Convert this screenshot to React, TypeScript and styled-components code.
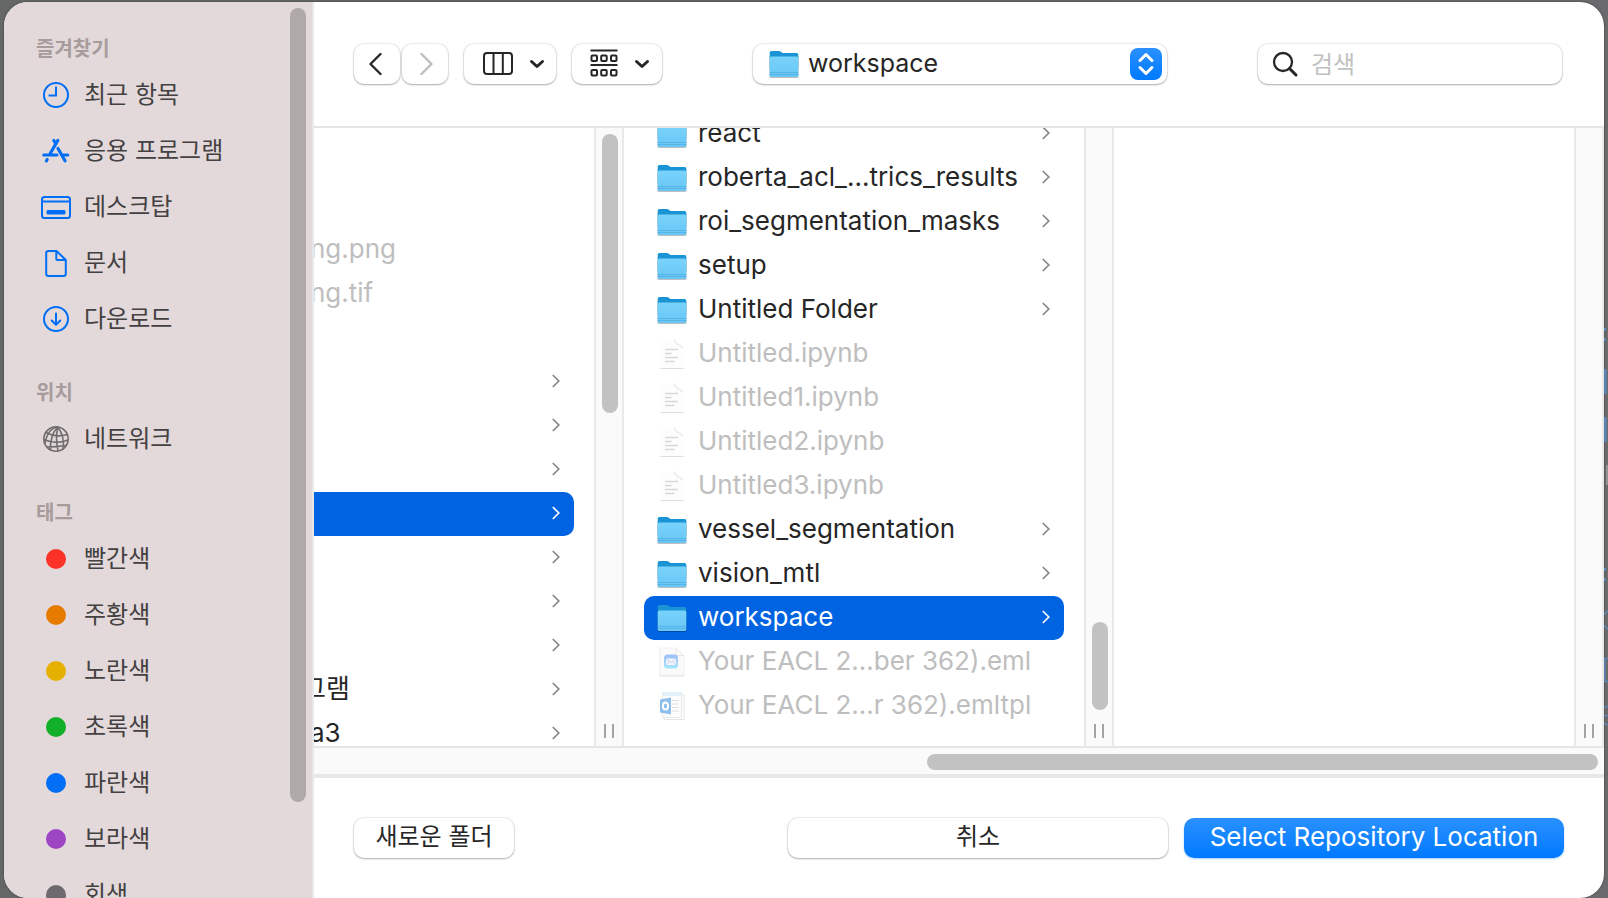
import React from "react";
import styled, { createGlobalStyle, css } from "styled-components";

const GlobalStyle = createGlobalStyle`
  * { box-sizing: border-box; }
  html, body { margin: 0; height: 100%; }
  body {
    font-family: Inter, "Noto Sans CJK KR", sans-serif;
    font-size: 25px;
    line-height: 32px;
    color: #262626;
    background: #67676a;
    overflow: hidden;
  }
  #root { height: 100%; }
  button, input, select { font: inherit; color: inherit; margin: 0; }
  ul { list-style: none; margin: 0; padding: 0; }
`;

const Desktop = styled.div`
  position: relative;
  height: 100vh;
  padding: 2px 4px 0;
  background: linear-gradient(90deg, #646766 0, #646766 50%, #6b6b6e 100%);
`;

const BackgroundEdge = styled.svg`
  position: absolute;
  top: 0;
  right: 0;
`;

const Dialog = styled.main`
  display: flex;
  height: 100%;
  background: #fff;
  border-radius: 24px;
  overflow: hidden;
  box-shadow: 0 0 2px #333;
`;

const Sidebar = styled.nav`
  flex: none;
  width: 310px;
  display: flex;
  justify-content: space-between;
  background: #e3d9da;
  background-clip: padding-box;
  border-right: 2px solid #e8e7e9;
  overflow: hidden;
`;

const SidebarList = styled.div`
  flex: 1;
  padding: 29px 0 0 32px;
`;

const Section = styled.section`
  margin-bottom: 28px;
`;

const SectionTitle = styled.h2`
  margin: 0;
  font-size: 20px;
  line-height: 36px;
  font-weight: 700;
  color: #a79b9c;
`;

const SidebarLink = styled.a`
  display: flex;
  align-items: center;
  gap: 8px;
  height: 56px;
  font-size: 24px;
  color: #444142;
  text-decoration: none;
  svg { flex: none; }
`;

const Tag = styled.span<{ $color: string }>`
  width: 20px;
  height: 20px;
  margin: 0 10px;
  border-radius: 50%;
  background: ${(p) => p.$color};
`;

const SidebarThumb = styled.div`
  flex: none;
  width: 16px;
  height: 794px;
  margin: 6px 6px 0 0;
  border-radius: 8px;
  background: #afa9a9;
`;

const Content = styled.div`
  flex: 1;
  min-width: 0;
  display: flex;
  flex-direction: column;
`;

const Toolbar = styled.header`
  flex: none;
  display: flex;
  align-items: center;
  height: 126px;
  padding: 0 42px 0 40px;
  border-bottom: 2px solid #e5e5e5;
`;

const raised = css`
  border: 0;
  border-radius: 10px;
  background: #fff;
  box-shadow: 0 0 1px 1px rgba(0, 0, 0, 0.07), 0 1px 2px rgba(0, 0, 0, 0.28);
`;

const ToolButton = styled.button<{ $width: number; $gap?: number; $menu?: boolean }>`
  ${raised}
  flex: none;
  display: flex;
  align-items: center;
  justify-content: center;
  gap: 16px;
  width: ${(p) => p.$width}px;
  height: 40px;
  margin-right: ${(p) => p.$gap ?? 16}px;
  padding: 0 0 0 ${(p) => (p.$menu ? 6 : 0)}px;
`;

const LocationBox = styled.label`
  ${raised}
  flex: none;
  display: flex;
  align-items: center;
  gap: 9px;
  width: 414px;
  height: 40px;
  margin: 0 auto;
  padding: 0 5px 0 16px;
`;

const LocationSelect = styled.select`
  flex: 1;
  height: 40px;
  padding: 0 0 2px;
  border: 0;
  background: none;
  appearance: none;
  outline: none;
`;

const Stepper = styled.span`
  flex: none;
  display: flex;
  align-items: center;
  justify-content: center;
  width: 32px;
  height: 32px;
  border-radius: 8px;
  background: linear-gradient(#2a90ff, #007aff);
`;

const SearchBox = styled.label`
  ${raised}
  flex: none;
  display: flex;
  align-items: center;
  gap: 12px;
  width: 304px;
  height: 40px;
  padding: 0 13px;
`;

const SearchInput = styled.input`
  flex: 1;
  min-width: 0;
  height: 36px;
  padding: 0;
  border: 0;
  outline: 0;
  background: none;
  font-size: 24px;
  &::placeholder { color: #c1c1c1; opacity: 1; }
`;

const Browser = styled.section`
  flex: 1;
  min-height: 0;
  display: flex;
  overflow: hidden;
`;

const Column = styled.div<{ $width?: number }>`
  flex: ${(p) => (p.$width ? `0 0 ${p.$width}px` : "1 1 0")};
  min-width: 0;
  overflow: hidden;
`;

const FileList = styled.ul<{ $scrolled: number; $flush?: boolean }>`
  margin: -${(p) => p.$scrolled}px 20px 0 ${(p) => (p.$flush ? 0 : 20)}px;
  font-size: 26px;
`;

const Row = styled.li<{ $selected?: boolean; $dimmed?: boolean; $flush?: boolean }>`
  display: flex;
  align-items: center;
  gap: 11px;
  height: 44px;
  padding: 0 14px 0 ${(p) => (p.$flush ? 0 : 13)}px;
  border-radius: ${(p) => (p.$flush ? "0 10px 10px 0" : "10px")};
  color: ${(p) => (p.$selected ? "#fff" : p.$dimmed ? "#bebebe" : "#262626")};
  background: ${(p) => (p.$selected ? "#0063e1" : "none")};
  svg { flex: none; }
`;

const FileName = styled.span<{ $cut?: number }>`
  flex: 1;
  min-width: 0;
  margin-left: -${(p) => p.$cut ?? 0}px;
  padding-bottom: 2px;
  white-space: nowrap;
`;

const Track = styled.div`
  flex: none;
  display: flex;
  flex-direction: column;
  align-items: flex-end;
  justify-content: space-between;
  width: 30px;
  padding: 6px 4px 8px 0;
  border: solid #e9e9e9;
  border-width: 0 2px;
  background: #fafafa;
`;

const ThumbArea = styled.div<{ $end?: boolean }>`
  flex: 1;
  display: flex;
  flex-direction: column;
  justify-content: ${(p) => (p.$end ? "flex-end" : "flex-start")};
  padding-bottom: 14px;
`;

const Thumb = styled.div<{ $length: number }>`
  width: 16px;
  height: ${(p) => p.$length}px;
  border-radius: 8px;
  background: #c2c2c2;
`;

const Grip = styled.div`
  width: 10px;
  height: 14px;
  margin-right: 4px;
  border: solid #a3a3a3;
  border-width: 0 2px;
`;

const HorizontalTrack = styled.div`
  flex: none;
  display: flex;
  justify-content: flex-end;
  height: 32px;
  padding: 6px 6px 0;
  border-top: 2px solid #e6e6e6;
  border-bottom: 4px solid #e8e8e8;
  background: #fafafa;
`;

const HorizontalThumb = styled.div`
  width: calc(50% + 32px);
  height: 16px;
  border-radius: 8px;
  background: #c2c2c2;
`;

const Footer = styled.footer`
  flex: none;
  display: flex;
  align-items: flex-start;
  gap: 16px;
  height: 120px;
  padding: 40px 40px 0;
`;

const FooterButton = styled.button<{ $width: number; $primary?: boolean }>`
  ${raised}
  width: ${(p) => p.$width}px;
  height: 40px;
  padding: 0 0 2px;
  font-size: 24px;
  line-height: 36px;
  ${(p) =>
    p.$primary &&
    css`
      color: #fff;
      font-size: 26px;
      background: linear-gradient(#2a90ff, #007aff);
      box-shadow: 0 1px 2px rgba(0, 122, 255, 0.35);
    `}
`;

const Spacer = styled.span`
  flex: 1;
`;

const FolderIcon = () => (
  <svg width="30" height="30" viewBox="0 0 30 30" aria-hidden="true">
    <defs>
      <linearGradient id="folderFront" x1="0" y1="0" x2="0" y2="1">
        <stop offset="0" stopColor="#79d2fb" />
        <stop offset="1" stopColor="#68c5f5" />
      </linearGradient>
    </defs>
    <rect x=".5" y="6" width="29" height="23" rx="1.5" fill="#000" opacity=".25" />
    <path d="M.7 3.500Q.7 2 2.200 2H10q1 0 1.800.7l1 .8q.7.5 1.600.5H27.800q1.500 0 1.500 1.500V20H.7z" fill="#1a94d4" />
    <path d="M.7 9q0-1.500 1.500-1.500h25.600q1.500 0 1.500 1.500v17.500q0 1.500-1.500 1.500H2.200Q.7 28 .7 26.500z" fill="url(#folderFront)" />
    <path d="M.7 23.500h28.600M.7 25.500h28.600" stroke="#4eaee0" strokeWidth=".8" />
  </svg>
);

const NotebookIcon = () => (
  <svg width="30" height="32" viewBox="0 0 30 32" aria-hidden="true">
    <path d="M4 1.500H19l8 8V30H4z" fill="#fdfdfd" />
    <path d="M17 1.500q1.500 4.500 4.500 5.200t4.500 3.800" fill="none" stroke="#ededed" strokeWidth="1.500" />
    <path d="M3.500 30.500H26.500" stroke="#dedede" strokeWidth="1" />
    <path d="M8 11.500h13M8 15.500H14.500M8 19.500h13M8 23.500h9.500" stroke="#d8d8d8" strokeWidth="1.500" />
  </svg>
);

const MailFileIcon = () => (
  <svg width="30" height="30" viewBox="0 0 30 30" aria-hidden="true">
    <defs>
      <linearGradient id="mailBadge" x1="0" y1="0" x2="0" y2="1">
        <stop offset="0" stopColor="#a0bdf9" />
        <stop offset="1" stopColor="#a4e6fc" />
      </linearGradient>
    </defs>
    <path d="M2.500 1H18.500l8.500 8v19.500H2.500z" fill="#fafafa" stroke="#f0f0f0" />
    <path d="M19 1.500V8.500H26.500z" fill="#fff" stroke="#e6e6e6" />
    <path d="M2.500 29H27" stroke="#e2e2e2" />
    <rect x="7" y="7.500" width="14" height="14" rx="3.500" fill="url(#mailBadge)" />
    <rect x="9" y="11.500" width="10" height="6.500" rx="1" fill="#f4f6fd" />
    <path d="M9.500 12l4.500 3.500 4.500-3.500M9.500 17.500l3-3M18.500 17.500l-3-3" fill="none" stroke="#b5c8ea" strokeWidth=".8" />
  </svg>
);

const OutlookFileIcon = () => (
  <svg width="30" height="30" viewBox="0 0 30 30" aria-hidden="true">
    <path d="M8 4H27v24.500H7z" fill="#fff" stroke="#e6e6e6" />
    <path d="M5.500 1.500H24.500v25H5.500z" fill="#fdfdfd" stroke="#e8e8e8" />
    <path d="M5.500 1H24.500v4h-19z" fill="#e2f0fa" />
    <path d="M15 9.500h6.500M15 13h6.500M15 16.500h6.500M15 20h6.500" stroke="#dddddd" />
    <path d="M3 8.500L14 6.500v17L3 21.500z" fill="#8fbdec" />
    <ellipse cx="8.500" cy="15" rx="2.600" ry="3.500" fill="none" stroke="#fff" strokeWidth="2" />
  </svg>
);

const RowChevron = () => (
  <svg width="8" height="14" viewBox="0 0 8 14" fill="none" stroke="currentColor" strokeWidth="1.700" aria-hidden="true">
    <path d="M.8 1L6.800 7l-6 6" />
  </svg>
);

const ChevronHolder = styled.span<{ $selected?: boolean }>`
  display: flex;
  padding-bottom: 2px;
  color: ${(p) => (p.$selected ? "#fff" : "#858585")};
`;

const DownChevron = () => (
  <svg width="16" height="10" viewBox="0 0 16 10" fill="none" stroke="#262626" strokeWidth="3" strokeLinecap="round" strokeLinejoin="round" aria-hidden="true">
    <path d="M2.500 2.500L8 7.500l5.500-5" />
  </svg>
);

const blue = "#006ef5";

const ClockIcon = () => (
  <svg width="40" height="30" viewBox="0 0 40 30" fill="none" stroke={blue} strokeWidth="2" aria-hidden="true">
    <circle cx="20" cy="15" r="12" />
    <path d="M20 6.500V15.500H12.500" />
  </svg>
);

const AppsIcon = () => (
  <svg width="40" height="30" viewBox="0 0 40 30" fill="none" stroke={blue} strokeWidth="3.200" strokeLinecap="round" aria-hidden="true">
    <path d="M21.800 4.500L14.200 17.500M17.800 4.500L20 8M7.800 19H21" />
    <path d="M22 12.500L29 24.800M27 19H31.800M11.200 23.500L10.400 24.800" />
  </svg>
);

const DesktopIcon = () => (
  <svg width="40" height="30" viewBox="0 0 40 30" fill="none" stroke={blue} strokeWidth="2" aria-hidden="true">
    <rect x="6" y="5" width="28" height="21" rx="2.500" />
    <path d="M6 9.500H34" />
    <rect x="11" y="18.500" width="18" height="3.500" rx=".5" fill={blue} strokeWidth="1" />
  </svg>
);

const DocumentIcon = () => (
  <svg width="40" height="30" viewBox="0 0 40 30" fill="none" stroke={blue} strokeWidth="2" strokeLinejoin="round" aria-hidden="true">
    <path d="M20.500 3H12.500Q10.200 3 10.200 5.300V25.700Q10.200 28 12.500 28H27.500Q29.800 28 29.800 25.700V12z" />
    <path d="M20.300 3V10.500Q20.300 12 21.800 12H29.500" />
  </svg>
);

const DownloadIcon = () => (
  <svg width="40" height="30" viewBox="0 0 40 30" fill="none" stroke={blue} strokeWidth="2" strokeLinecap="round" strokeLinejoin="round" aria-hidden="true">
    <circle cx="20" cy="15" r="12" />
    <path d="M20 9.500V20.500M15.700 16.500L20 20.800l4.300-4.300" />
  </svg>
);

const NetworkIcon = () => (
  <svg width="40" height="30" viewBox="0 0 40 30" fill="none" stroke="#716c6d" strokeWidth="1.600" aria-hidden="true">
    <circle cx="20" cy="15" r="12.200" />
    <path d="M22 3Q14 10 14.500 26M22 3Q19 13 22 27M22 3Q29 13 27 25M22 3Q12 4 9 19M10 8.500Q20 14 31.500 10.500M8 15.500Q20 21 32 16M11 23Q20 23 30 21.500" />
  </svg>
);

type FileKind = "folder" | "notebook" | "mail" | "outlook";

const fileIcons: Record<FileKind, React.ReactNode> = {
  folder: <FolderIcon />,
  notebook: <NotebookIcon />,
  mail: <MailFileIcon />,
  outlook: <OutlookFileIcon />,
};

const favorites = [
  { label: "최근 항목", icon: <ClockIcon /> },
  { label: "응용 프로그램", icon: <AppsIcon /> },
  { label: "데스크탑", icon: <DesktopIcon /> },
  { label: "문서", icon: <DocumentIcon /> },
  { label: "다운로드", icon: <DownloadIcon /> },
];

const tags = [
  { label: "빨간색", color: "#fc3229" },
  { label: "주황색", color: "#e67b00" },
  { label: "노란색", color: "#e6b000" },
  { label: "초록색", color: "#12b028" },
  { label: "파란색", color: "#006ef5" },
  { label: "보라색", color: "#9d45c3" },
  { label: "회색", color: "#6d696e" },
];

// "cut" is how much of a name is scrolled away under the sidebar.
const parentRows: { name: string; cut?: number; dimmed?: boolean; folder?: boolean; selected?: boolean }[] = [
  { name: "" },
  { name: "" },
  { name: "" },
  { name: "ng.png", cut: 4, dimmed: true },
  { name: "ng.tif", cut: 4, dimmed: true },
  { name: "" },
  { name: "", folder: true },
  { name: "", folder: true },
  { name: "", folder: true },
  { name: "", folder: true, selected: true },
  { name: "", folder: true },
  { name: "", folder: true },
  { name: "", folder: true },
  { name: "그램", cut: 12, folder: true },
  { name: "a3", cut: 4, folder: true },
];

const files: { name: string; kind: FileKind; selected?: boolean }[] = [
  { name: "react", kind: "folder" },
  { name: "roberta_acl_...trics_results", kind: "folder" },
  { name: "roi_segmentation_masks", kind: "folder" },
  { name: "setup", kind: "folder" },
  { name: "Untitled Folder", kind: "folder" },
  { name: "Untitled.ipynb", kind: "notebook" },
  { name: "Untitled1.ipynb", kind: "notebook" },
  { name: "Untitled2.ipynb", kind: "notebook" },
  { name: "Untitled3.ipynb", kind: "notebook" },
  { name: "vessel_segmentation", kind: "folder" },
  { name: "vision_mtl", kind: "folder" },
  { name: "workspace", kind: "folder", selected: true },
  { name: "Your EACL 2...ber 362).eml", kind: "mail" },
  { name: "Your EACL 2...r 362).emltpl", kind: "outlook" },
];

export default function App() {
  return (
    <Desktop>
      <GlobalStyle />
      <BackgroundEdge width="4" height="740" viewBox="0 0 4 740" fill="none" stroke="#5b87b8" strokeWidth="1.500" aria-hidden="true">
        <path d="M0 329.500h2M0 339.500h2M0 569.500h2M0 579.500h2" strokeWidth="3" />
        <path d="M1.500 369v25M1.500 417v25" strokeWidth="2.500" />
        <path d="M3 465v20" stroke="#a0a0a0" />
        <path d="M4 611Q.5 613 .5 615M.5 625Q.5 627 4 629M4 658.500H1V681.500H4M0 708q2-2 4-2M0 715.500h4M0 723q2 2 4 2" />
      </BackgroundEdge>
      <Dialog>
        <Sidebar>
          <SidebarList>
            <Section>
              <SectionTitle>즐겨찾기</SectionTitle>
              {favorites.map((item) => (
                <SidebarLink href="#" key={item.label}>
                  {item.icon}
                  {item.label}
                </SidebarLink>
              ))}
            </Section>
            <Section>
              <SectionTitle>위치</SectionTitle>
              <SidebarLink href="#">
                <NetworkIcon />
                네트워크
              </SidebarLink>
            </Section>
            <Section>
              <SectionTitle>태그</SectionTitle>
              {tags.map((tag) => (
                <SidebarLink href="#" key={tag.label}>
                  <Tag $color={tag.color} />
                  {tag.label}
                </SidebarLink>
              ))}
            </Section>
          </SidebarList>
          <SidebarThumb />
        </Sidebar>
        <Content>
          <Toolbar>
            <ToolButton $width={46} $gap={2} aria-label="뒤로">
              <svg width="16" height="24" viewBox="0 0 16 24" fill="none" stroke="#262626" strokeWidth="2.300" strokeLinecap="round" strokeLinejoin="round">
                <path d="M11.500 2L1.500 12l10 10" />
              </svg>
            </ToolButton>
            <ToolButton $width={46} aria-label="앞으로" disabled>
              <svg width="16" height="24" viewBox="0 0 16 24" fill="none" stroke="#bdbdbd" strokeWidth="2.300" strokeLinecap="round" strokeLinejoin="round">
                <path d="M4.500 2l10 10-10 10" />
              </svg>
            </ToolButton>
            <ToolButton $width={92} $menu aria-label="계층 보기">
              <svg width="32" height="26" viewBox="0 0 32 26" fill="none" stroke="#262626" strokeWidth="2">
                <rect x="3" y="2" width="28" height="21" rx="3" />
                <path d="M12.500 2V23M21.800 2V23" />
              </svg>
              <DownChevron />
            </ToolButton>
            <ToolButton $width={90} $gap={0} $menu aria-label="그룹">
              <svg width="28" height="30" viewBox="0 0 28 30" fill="none" stroke="#262626" strokeWidth="2">
                <path d="M.5 1.500h27M.5 16h27" />
                <rect x="1.500" y="6.500" width="5.500" height="5.500" rx="1" />
                <rect x="11.200" y="6.500" width="5.500" height="5.500" rx="1" />
                <rect x="21" y="6.500" width="5.500" height="5.500" rx="1" />
                <rect x="1.500" y="21" width="5.500" height="5.500" rx="1" />
                <rect x="11.200" y="21" width="5.500" height="5.500" rx="1" />
                <rect x="21" y="21" width="5.500" height="5.500" rx="1" />
              </svg>
              <DownChevron />
            </ToolButton>
            <LocationBox>
              <FolderIcon />
              <LocationSelect aria-label="위치" defaultValue="workspace">
                <option>workspace</option>
              </LocationSelect>
              <Stepper>
                <svg width="18" height="24" viewBox="0 0 18 24" fill="none" stroke="#fff" strokeWidth="3" strokeLinecap="round" strokeLinejoin="round">
                  <path d="M3 8.500l6-6 6 6M3 15.500l6 6 6-6" />
                </svg>
              </Stepper>
            </LocationBox>
            <SearchBox>
              <svg width="28" height="28" viewBox="0 0 28 28" fill="none" stroke="#262626" strokeWidth="2.300" strokeLinecap="round" aria-hidden="true">
                <circle cx="12" cy="12" r="9" />
                <path d="M18.500 18.500L25 25" strokeWidth="3" />
              </svg>
              <SearchInput type="text" placeholder="검색" aria-label="검색" />
            </SearchBox>
          </Toolbar>
          <Browser>
            <Column $width={280}>
              <FileList $scrolled={32} $flush>
                {parentRows.map((row, i) => (
                  <Row key={i} $flush $selected={row.selected} $dimmed={row.dimmed}>
                    <FileName $cut={row.cut}>{row.name}</FileName>
                    {row.folder && (
                      <ChevronHolder $selected={row.selected}>
                        <RowChevron />
                      </ChevronHolder>
                    )}
                  </Row>
                ))}
              </FileList>
            </Column>
            <Track>
              <ThumbArea>
                <Thumb $length={279} />
              </ThumbArea>
              <Grip />
            </Track>
            <Column $width={460}>
              <FileList $scrolled={16}>
                {files.map((file) => (
                  <Row key={file.name} $selected={file.selected} $dimmed={file.kind !== "folder"}>
                    {fileIcons[file.kind]}
                    <FileName>{file.name}</FileName>
                    {file.kind === "folder" && (
                      <ChevronHolder $selected={file.selected}>
                        <RowChevron />
                      </ChevronHolder>
                    )}
                  </Row>
                ))}
              </FileList>
            </Column>
            <Track>
              <ThumbArea $end>
                <Thumb $length={88} />
              </ThumbArea>
              <Grip />
            </Track>
            <Column />
            <Track>
              <ThumbArea />
              <Grip />
            </Track>
          </Browser>
          <HorizontalTrack>
            <HorizontalThumb />
          </HorizontalTrack>
          <Footer>
            <FooterButton $width={160}>새로운 폴더</FooterButton>
            <Spacer />
            <FooterButton $width={380}>취소</FooterButton>
            <FooterButton $width={380} $primary>
              Select Repository Location
            </FooterButton>
          </Footer>
        </Content>
      </Dialog>
    </Desktop>
  );
}
